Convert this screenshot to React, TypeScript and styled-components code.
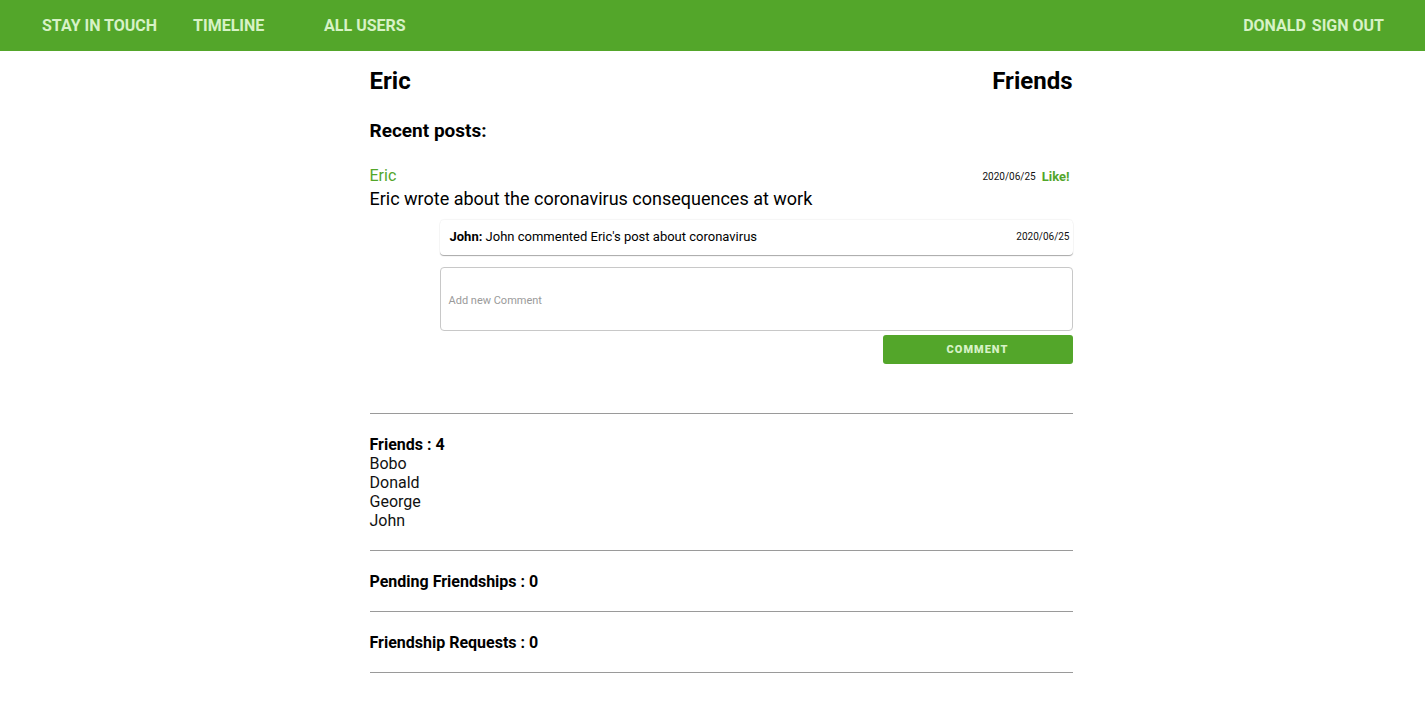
import React from "react";
import styled, { createGlobalStyle } from "styled-components";

const Global = createGlobalStyle`
  html, body { margin: 0; padding: 0; background: #fff; }
  body { font-family: Roboto, "Liberation Sans", Arial, sans-serif; color: #000; }
  * { box-sizing: border-box; }
`;

const GREEN = "#53a62a";
const NAVTEXT = "#d7f2c6";

const Nav = styled.nav`
  height: 51px;
  background: ${GREEN};
  display: flex;
  align-items: center;
  justify-content: space-between;
  padding: 0 41px 0 42px;
`;

const NavGroup = styled.div<{ $gap: number }>`
  display: flex;
  align-items: center;
  gap: ${(p) => p.$gap}px;
`;

const NavLink = styled.a<{ $width?: number }>`
  color: ${NAVTEXT};
  font-weight: 700;
  font-size: 16px;
  text-transform: uppercase;
  text-decoration: none;
  letter-spacing: 0;
  ${(p) => (p.$width ? `width: ${p.$width}px;` : "")}
`;

const Container = styled.main`
  width: 720px;
  margin: 0 auto;
  padding: 13px 0 40px 17px;
`;

const HeaderRow = styled.div`
  display: flex;
  justify-content: space-between;
  align-items: center;
  height: 34px;
`;

const Title = styled.h1`
  margin: 0;
  font-size: 24px;
  font-weight: 700;
`;

const SubTitle = styled.h2`
  margin: 0;
  padding-top: 20px;
  height: 46px;
  font-size: 19px;
  font-weight: 700;
  line-height: 26px;
`;

const Post = styled.section`
  padding-top: 21px;
`;

const PostHead = styled.div`
  display: flex;
  justify-content: space-between;
  align-items: center;
  height: 20px;
`;

const Author = styled.span`
  color: ${GREEN};
  font-size: 16px;
`;

const Meta = styled.div`
  display: flex;
  align-items: center;
  gap: 6px;
  padding: 2px 3px 0 0;
`;

const SmallDate = styled.span`
  font-size: 10px;
  color: #111;
`;

const Like = styled.span`
  color: ${GREEN};
  font-size: 13px;
  font-weight: 700;
`;

const PostBody = styled.p`
  margin: 0;
  font-size: 18px;
  line-height: 28px;
`;

const Comments = styled.div`
  margin: 7px 0 0 70px;
  display: flex;
  flex-direction: column;
`;

const CommentCard = styled.div`
  height: 35px;
  display: flex;
  justify-content: space-between;
  align-items: center;
  padding: 0 3px 2px 10px;
  border-radius: 4px;
  box-shadow: 0 1px 1px rgba(0, 0, 0, 0.35), 0 -1px 1px rgba(0, 0, 0, 0.04);
  font-size: 13px;
`;

const CommentText = styled.span`
  b { font-weight: 700; }
`;

const CommentInput = styled.textarea`
  margin-top: 12px;
  height: 64px;
  width: 100%;
  border: 1px solid #c8c8c8;
  border-radius: 4px;
  resize: none;
  padding: 26px 8px 0;
  font-family: Roboto, "Liberation Sans", Arial, sans-serif;
  font-size: 11px;
  &::placeholder { color: #9a9a9a; }
`;

const ButtonRow = styled.div`
  display: flex;
  justify-content: flex-end;
  margin-top: 4px;
`;

const CommentButton = styled.button`
  width: 190px;
  height: 29px;
  border: none;
  border-radius: 3px;
  background: ${GREEN};
  color: ${NAVTEXT};
  font-family: Roboto, "Liberation Sans", Arial, sans-serif;
  font-weight: 900;
  font-size: 11px;
  letter-spacing: 1px;
`;

const Rule = styled.hr`
  margin: 0;
  border: none;
  border-top: 1px solid #9a9a9a;
`;

const Section = styled.section<{ $pad: string }>`
  padding: ${(p) => p.$pad};
`;

const SectionTitle = styled.h3`
  margin: 0;
  font-size: 16px;
  font-weight: 700;
  line-height: 19px;
`;

const FriendItem = styled.div`
  font-size: 16px;
  line-height: 19px;
  color: #111;
`;

export default function App() {
  const friends = ["Bobo", "Donald", "George", "John"];
  return (
    <>
      <Global />
      <Nav>
        <NavGroup $gap={36}>
          <NavLink>Stay in touch</NavLink>
          <NavLink $width={95}>Timeline</NavLink>
          <NavLink>All users</NavLink>
        </NavGroup>
        <NavGroup $gap={6}>
          <NavLink>Donald</NavLink>
          <NavLink>Sign out</NavLink>
        </NavGroup>
      </Nav>
      <Container>
        <HeaderRow>
          <Title>Eric</Title>
          <Title>Friends</Title>
        </HeaderRow>
        <SubTitle>Recent posts:</SubTitle>
        <Post>
          <PostHead>
            <Author>Eric</Author>
            <Meta>
              <SmallDate>2020/06/25</SmallDate>
              <Like>Like!</Like>
            </Meta>
          </PostHead>
          <PostBody>Eric wrote about the coronavirus consequences at work</PostBody>
          <Comments>
            <CommentCard>
              <CommentText>
                <b>John:</b> John commented Eric's post about coronavirus
              </CommentText>
              <SmallDate>2020/06/25</SmallDate>
            </CommentCard>
            <CommentInput placeholder="Add new Comment" />
            <ButtonRow>
              <CommentButton>COMMENT</CommentButton>
            </ButtonRow>
          </Comments>
        </Post>
        <Section $pad="49px 0 0" />
        <Rule />
        <Section $pad="21px 0 20px">
          <SectionTitle>Friends : 4</SectionTitle>
          {friends.map((f) => (
            <FriendItem key={f}>{f}</FriendItem>
          ))}
        </Section>
        <Rule />
        <Section $pad="21px 0 20px">
          <SectionTitle>Pending Friendships : 0</SectionTitle>
        </Section>
        <Rule />
        <Section $pad="21px 0 20px">
          <SectionTitle>Friendship Requests : 0</SectionTitle>
        </Section>
        <Rule />
      </Container>
    </>
  );
}
